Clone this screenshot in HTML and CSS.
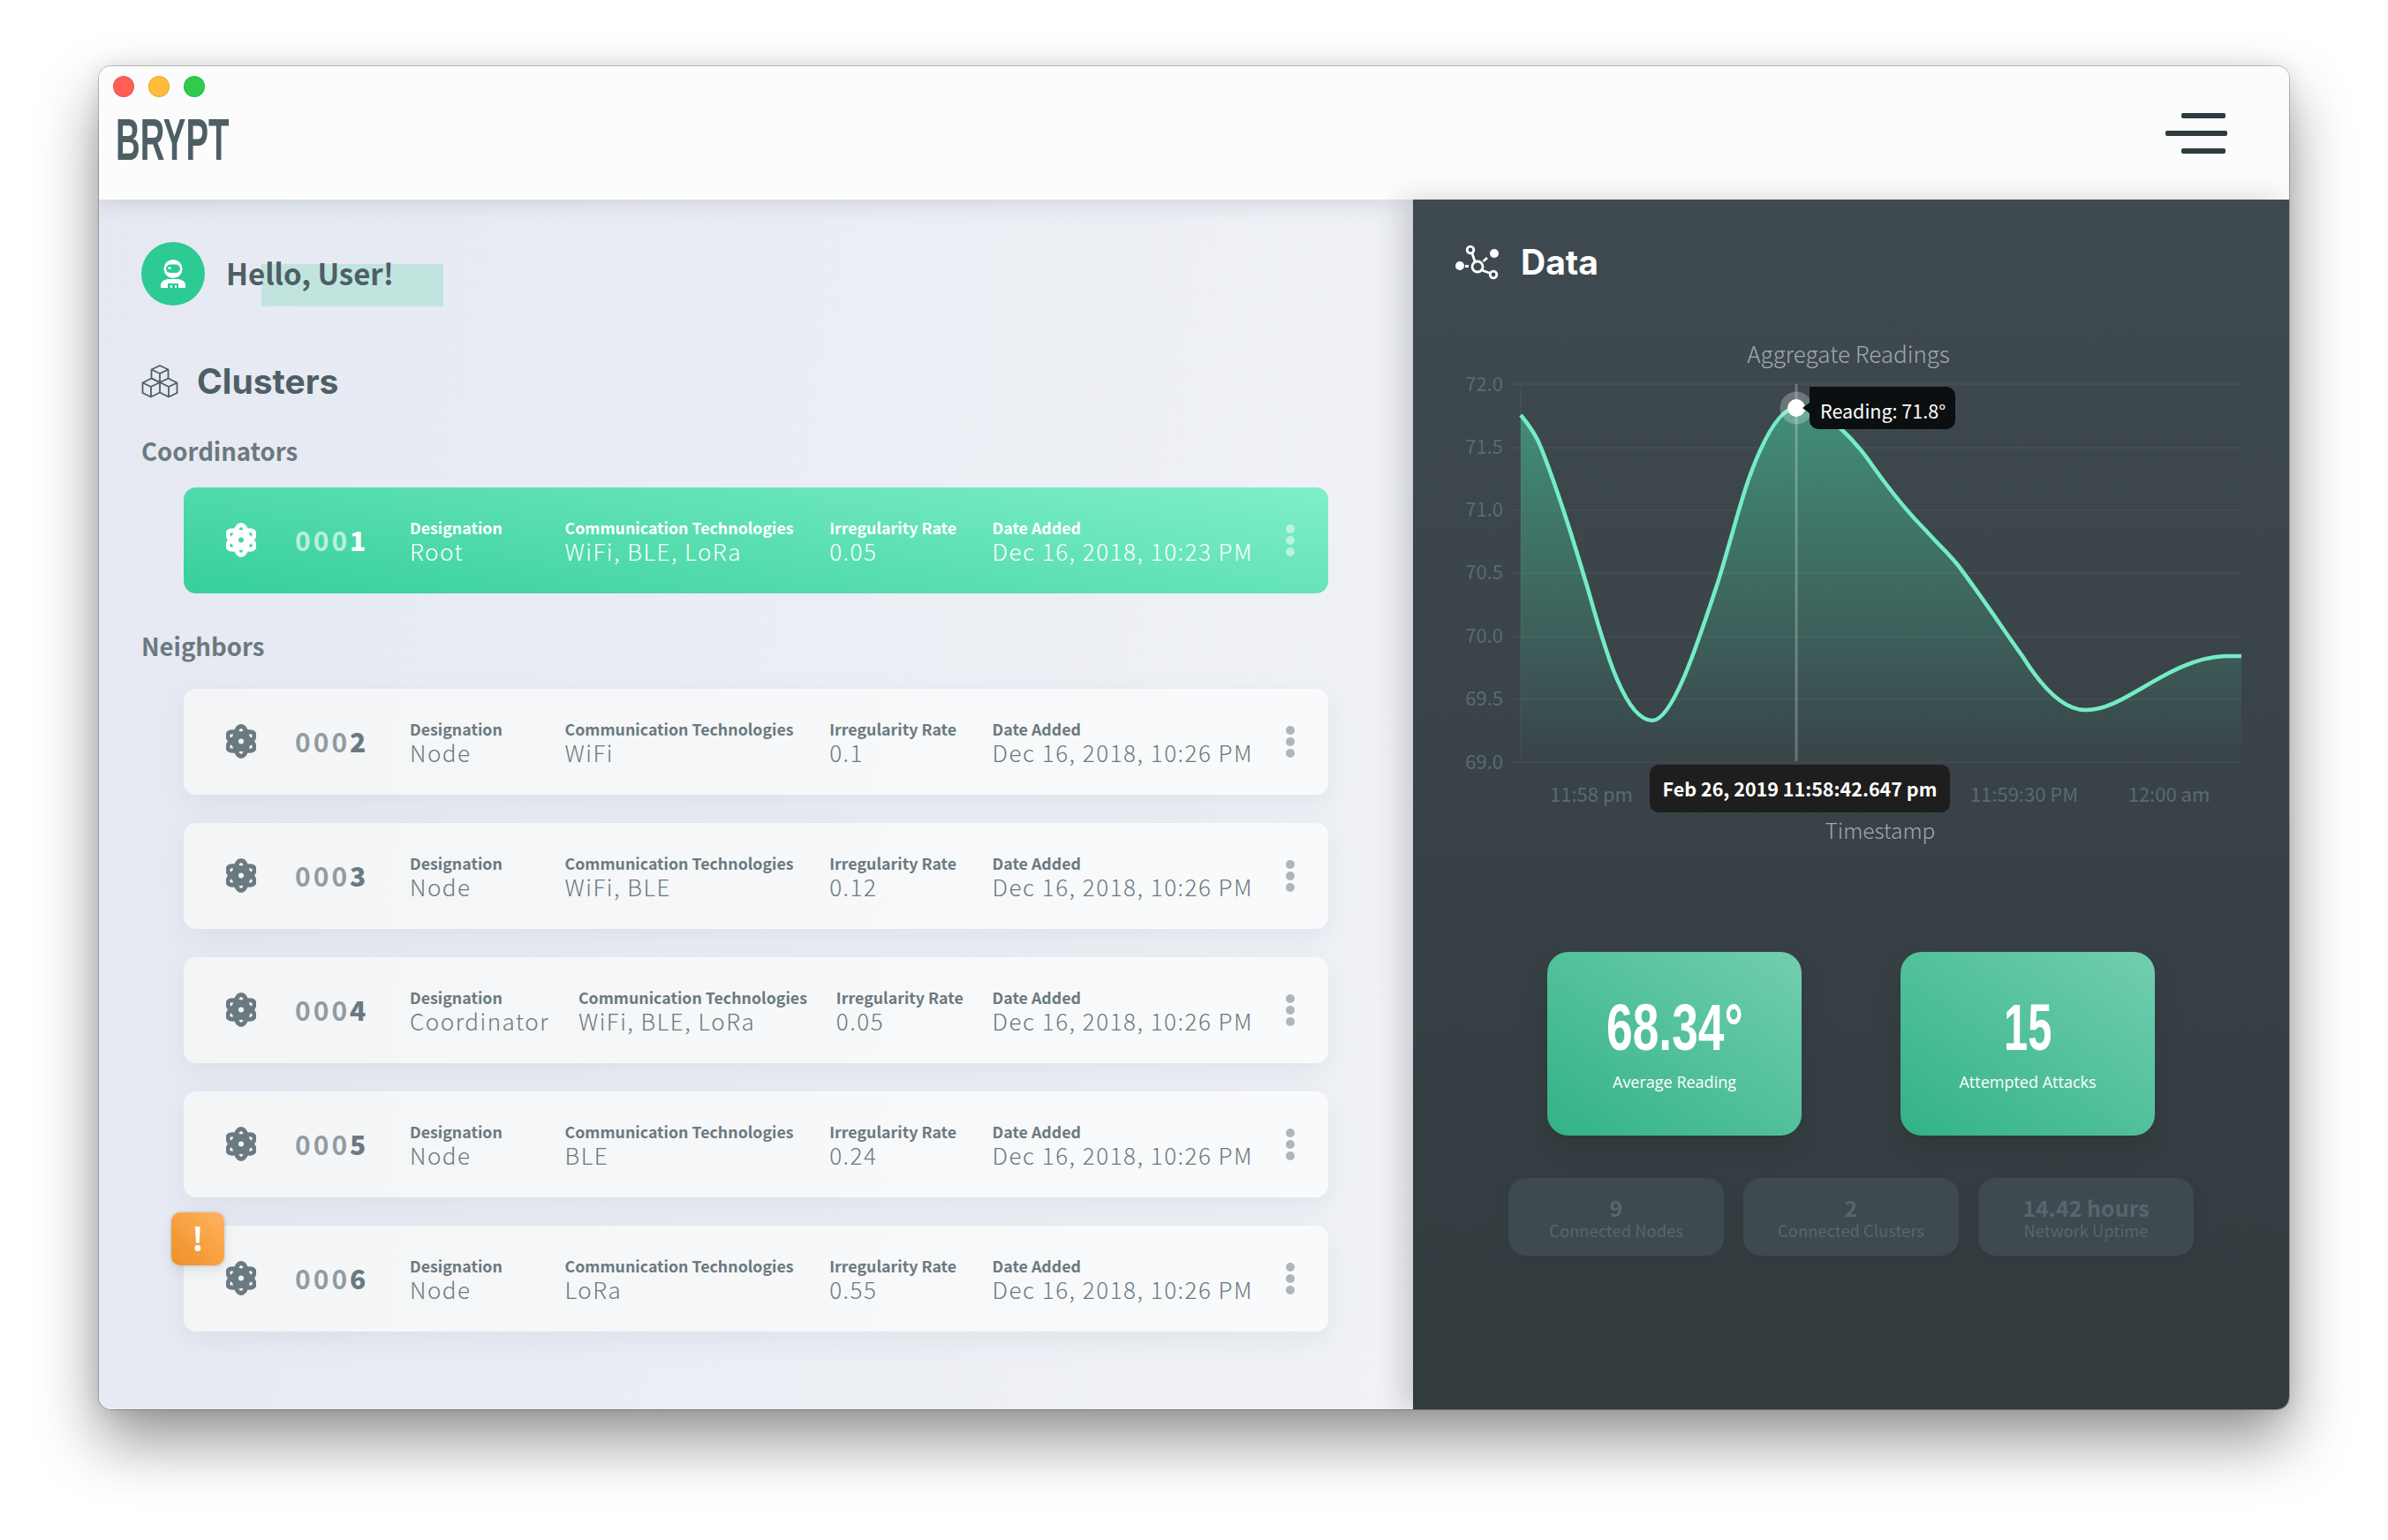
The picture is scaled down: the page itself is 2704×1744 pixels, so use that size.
FILE: index.html
```html
<!DOCTYPE html>
<html lang="en">
<head>
    <meta charset="UTF-8">
    <title>Brypt</title>
    <link rel="stylesheet" href="styles.css">
</head>
<body>
    <svg class="defs" width="0" height="0">
        <symbol id="atom" viewBox="0 0 34 39">
            <g fill="none" stroke="currentColor" stroke-width="5">
                <ellipse cx="17" cy="19.5" rx="7.5" ry="17"/>
                <ellipse cx="17" cy="19.5" rx="7.5" ry="17" transform="rotate(60 17 19.5)"/>
                <ellipse cx="17" cy="19.5" rx="7.5" ry="17" transform="rotate(-60 17 19.5)"/>
                <circle cx="17" cy="19.5" r="5" stroke-width="4"/>
            </g>
        </symbol>
    </svg>

    <div class="window">
        <div class="topbar">
            <div class="lights">
                <span class="light red"></span>
                <span class="light yellow"></span>
                <span class="light green"></span>
            </div>
            <div class="logo">BRYPT</div>
            <div class="menu">
                <span></span>
                <span class="long"></span>
                <span></span>
            </div>
        </div>

        <div class="main">
            <!-- clusters -->
            <div class="left">
                <div class="greet">
                    <div class="avatar">
                        <svg width="30" height="34" viewBox="0 0 30 34">
                            <circle cx="15" cy="11.500" r="10.500" fill="#fff"/>
                            <rect x="7" y="6.500" width="16" height="9.500" rx="4.700" fill="#2dcb93"/>
                            <circle cx="11" cy="10.500" r="1.600" fill="#fff"/>
                            <path fill="#fff" d="M1 33v-3C1 25.500 6 23 11 23h8c5 0 10 2.500 10 7v3z"/>
                            <rect x="9" y="28" width="12" height="5" fill="#2dcb93"/>
                            <rect x="12" y="30" width="2" height="3" fill="#fff"/>
                            <rect x="17" y="30" width="2" height="3" fill="#fff"/>
                        </svg>
                    </div>
                    <div class="hello">Hello, User!</div>
                </div>

                <div class="section-title">
                    <svg width="42" height="38" viewBox="0 0 42 38" fill="none" stroke="#4e5f66" stroke-width="1.800" stroke-linejoin="round">
                        <path d="M21 1l9.500 4.500v10L21 20l-9.500-4.500v-10zM11.500 5.500L21 10l9.500-4.500M21 10v10"/>
                        <path d="M11.500 15.500L21 20v11.500L11 36.500 1.500 32V20.500zM1.500 20.500L11 25l10-5M11 25v11.500"/>
                        <path d="M30.500 15.500l10 5V32L31 36.500 21 31.500M21 20l10 5 9.500-4.500M31 25v11.500"/>
                    </svg>
                    <h2>Clusters</h2>
                </div>

                <div class="group-label">Coordinators</div>
                <div class="row active">
                    <svg class="atom"><use href="#atom"/></svg>
                    <div class="node-id">000<b>1</b></div>
                    <div class="fields">
                        <div class="field kind"><label>Designation</label><span>Root</span></div>
                        <div class="field"><label>Communication Technologies</label><span>WiFi, BLE, LoRa</span></div>
                        <div class="field"><label>Irregularity Rate</label><span>0.05</span></div>
                        <div class="field"><label>Date Added</label><span>Dec 16, 2018, 10:23 PM</span></div>
                    </div>
                    <div class="dots"><i></i><i></i><i></i></div>
                </div>

                <div class="group-label second">Neighbors</div>
                <div class="row">
                    <svg class="atom"><use href="#atom"/></svg>
                    <div class="node-id">000<b>2</b></div>
                    <div class="fields">
                        <div class="field kind"><label>Designation</label><span>Node</span></div>
                        <div class="field"><label>Communication Technologies</label><span>WiFi</span></div>
                        <div class="field"><label>Irregularity Rate</label><span>0.1</span></div>
                        <div class="field"><label>Date Added</label><span>Dec 16, 2018, 10:26 PM</span></div>
                    </div>
                    <div class="dots"><i></i><i></i><i></i></div>
                </div>
                <div class="row">
                    <svg class="atom"><use href="#atom"/></svg>
                    <div class="node-id">000<b>3</b></div>
                    <div class="fields">
                        <div class="field kind"><label>Designation</label><span>Node</span></div>
                        <div class="field"><label>Communication Technologies</label><span>WiFi, BLE</span></div>
                        <div class="field"><label>Irregularity Rate</label><span>0.12</span></div>
                        <div class="field"><label>Date Added</label><span>Dec 16, 2018, 10:26 PM</span></div>
                    </div>
                    <div class="dots"><i></i><i></i><i></i></div>
                </div>
                <div class="row">
                    <svg class="atom"><use href="#atom"/></svg>
                    <div class="node-id">000<b>4</b></div>
                    <div class="fields">
                        <div class="field kind"><label>Designation</label><span>Coordinator</span></div>
                        <div class="field"><label>Communication Technologies</label><span>WiFi, BLE, LoRa</span></div>
                        <div class="field"><label>Irregularity Rate</label><span>0.05</span></div>
                        <div class="field"><label>Date Added</label><span>Dec 16, 2018, 10:26 PM</span></div>
                    </div>
                    <div class="dots"><i></i><i></i><i></i></div>
                </div>
                <div class="row">
                    <svg class="atom"><use href="#atom"/></svg>
                    <div class="node-id">000<b>5</b></div>
                    <div class="fields">
                        <div class="field kind"><label>Designation</label><span>Node</span></div>
                        <div class="field"><label>Communication Technologies</label><span>BLE</span></div>
                        <div class="field"><label>Irregularity Rate</label><span>0.24</span></div>
                        <div class="field"><label>Date Added</label><span>Dec 16, 2018, 10:26 PM</span></div>
                    </div>
                    <div class="dots"><i></i><i></i><i></i></div>
                </div>
                <div class="row">
                    <div class="alert">!</div>
                    <svg class="atom"><use href="#atom"/></svg>
                    <div class="node-id">000<b>6</b></div>
                    <div class="fields">
                        <div class="field kind"><label>Designation</label><span>Node</span></div>
                        <div class="field"><label>Communication Technologies</label><span>LoRa</span></div>
                        <div class="field"><label>Irregularity Rate</label><span>0.55</span></div>
                        <div class="field"><label>Date Added</label><span>Dec 16, 2018, 10:26 PM</span></div>
                    </div>
                    <div class="dots"><i></i><i></i><i></i></div>
                </div>
            </div>

            <!-- data -->
            <div class="right">
                <div class="data-title">
                    <svg width="50" height="40" viewBox="0 0 50 40" fill="none" stroke="#fff" stroke-width="2.800">
                        <circle cx="25" cy="25" r="6"/>
                        <circle cx="17" cy="6" r="3.800"/>
                        <circle cx="43" cy="34" r="3.800"/>
                        <circle cx="5" cy="24" r="5" fill="#fff" stroke="none"/>
                        <circle cx="44" cy="10" r="5" fill="#fff" stroke="none"/>
                        <path d="M19 10l3 9M30 29l9.500 3.500M11 24.500h4M31.500 19l4.500-4"/>
                    </svg>
                    <h2>Data</h2>
                </div>

                <svg class="chart" viewBox="1600 376 992 584" width="992" height="584">
                    <defs>
                        <linearGradient id="fade" x1="0" y1="462" x2="0" y2="866" gradientUnits="userSpaceOnUse">
                            <stop offset="0" stop-color="#45c79c" stop-opacity=".55"/>
                            <stop offset="1" stop-color="#45c79c" stop-opacity="0"/>
                        </linearGradient>
                    </defs>
                    <text class="chart-title" x="2093" y="411" text-anchor="middle">Aggregate Readings</text>

                    <g class="grid">
                        <path d="M1712 435H2538M1712 507H2538M1712 578H2538M1712 649H2538M1712 721H2538M1712 792H2538M1712 863H2538M1722 435V863"/>
                    </g>
                    <g class="ticks">
                        <text x="1702" y="443" text-anchor="end">72.0</text>
                        <text x="1702" y="514" text-anchor="end">71.5</text>
                        <text x="1702" y="585" text-anchor="end">71.0</text>
                        <text x="1702" y="656" text-anchor="end">70.5</text>
                        <text x="1702" y="728" text-anchor="end">70.0</text>
                        <text x="1702" y="799" text-anchor="end">69.5</text>
                        <text x="1702" y="871" text-anchor="end">69.0</text>
                        <text x="1802" y="908" text-anchor="middle">11:58 pm</text>
                        <text x="2292" y="908" text-anchor="middle">11:59:30 PM</text>
                        <text x="2456" y="908" text-anchor="middle">12:00 am</text>
                    </g>

                    <path fill="url(#fade)" d="M1722 470C1732 482 1740 494 1745 507C1760 545 1778 600 1795 657C1810 705 1835 816 1871 816C1895 816 1925 720 1945 660C1960 612 1970 570 1981 540C1992 510 2012 462 2034 462C2050 462 2068 470 2084 485C2100 500 2112 515 2120 527C2140 555 2160 580 2180 600C2195 617 2205 625 2217 640C2240 670 2270 715 2290 743C2310 775 2335 804 2361 804C2405 806 2455 745 2520 743L2538 743V866H1722Z"/>
                    <path class="hover-line" d="M2034 435V862"/>
                    <path class="curve" d="M1722 470C1732 482 1740 494 1745 507C1760 545 1778 600 1795 657C1810 705 1835 816 1871 816C1895 816 1925 720 1945 660C1960 612 1970 570 1981 540C1992 510 2012 462 2034 462C2050 462 2068 470 2084 485C2100 500 2112 515 2120 527C2140 555 2160 580 2180 600C2195 617 2205 625 2217 640C2240 670 2270 715 2290 743C2310 775 2335 804 2361 804C2405 806 2455 745 2520 743L2538 743"/>

                    <circle cx="2034" cy="462" r="18.500" fill="#fff" fill-opacity=".25"/>
                    <circle cx="2034" cy="462" r="10" fill="#fff"/>
                    <path d="M2049 438H2204a10 10 0 0 1 10 10V476a10 10 0 0 1-10 10H2059a10 10 0 0 1-10-10V468L2041 462L2049 456Z" fill="#0b0f10"/>
                    <text class="tip" x="2061" y="474">Reading: 71.8°</text>

                    <rect x="1868" y="866" width="340" height="54" rx="10" fill="#1e1e1e"/>
                    <text class="tip-bold" x="2038" y="902" text-anchor="middle">Feb 26, 2019 11:58:42.647 pm</text>
                    <text class="axis-title" x="2129" y="950" text-anchor="middle">Timestamp</text>
                </svg>

                <div class="big-cards">
                    <div class="big-card">
                        <div class="big-num"><span>68.34°</span></div>
                        <div class="big-label">Average Reading</div>
                    </div>
                    <div class="big-card">
                        <div class="big-num"><span class="tight">15</span></div>
                        <div class="big-label">Attempted Attacks</div>
                    </div>
                </div>

                <div class="small-cards">
                    <div class="small-card"><b>9</b><span>Connected Nodes</span></div>
                    <div class="small-card"><b>2</b><span>Connected Clusters</span></div>
                    <div class="small-card"><b>14.42 hours</b><span>Network Uptime</span></div>
                </div>
            </div>
        </div>
    </div>
</body>
</html>
```
FILE: styles.css
```css
html, body {
    margin: 0;
    padding: 0;
    height: 1744px;
    overflow: hidden;
    background-color: #fff;
}

body {
    font-family: "Noto Sans CJK SC", "Noto Sans", sans-serif;
}

.defs {
    position: absolute;
}

.window {
    width: 2480px;
    height: 1521px;
    margin: 75px 0 0 112px;
    border-radius: 14px;
    overflow: hidden;
    box-shadow: 0 0 0 1px rgba(0, 0, 0, 0.22), 0 36px 70px rgba(0, 0, 0, 0.42), 0 0 24px rgba(0, 0, 0, 0.1);
}

.topbar {
    position: relative;
    z-index: 1;
    height: 151px;
    padding: 11px 70px 0 16px;
    box-sizing: border-box;
    background-color: #fcfcfc;
    box-shadow: 0 4px 24px rgba(60, 70, 100, 0.16);
    display: grid;
    grid-template-columns: 1fr auto;
    grid-template-rows: 24px auto;
}

.lights {
    grid-column: 1 / 3;
    display: flex;
    gap: 16px;
}

.light {
    width: 24px;
    height: 24px;
    border-radius: 50%;
    box-sizing: border-box;
    border: 1px solid rgba(0, 0, 0, 0.1);
}

.red { background-color: #ff5f57; }
.yellow { background-color: #ffbc3a; }
.green { background-color: #2fcb4b; }

.logo {
    margin: 15px 0 0 3px;
    font-family: "Liberation Sans", sans-serif;
    font-weight: 700;
    font-size: 66px;
    line-height: 66px;
    color: #4e5e65;
    transform: scaleX(0.58);
    transform-origin: left center;
}

.menu {
    margin-top: 18px;
    display: flex;
    flex-direction: column;
    align-items: flex-end;
    gap: 14px;
}

.menu span {
    width: 50px;
    height: 6px;
    margin-right: 2px;
    border-radius: 2px;
    background-color: #2e3b3f;
}

.menu .long {
    width: 70px;
    margin-right: 0;
}

.main {
    display: flex;
    height: 1370px;
}

.left {
    width: 1488px;
    padding: 48px 96px 0 48px;
    box-sizing: border-box;
    background: linear-gradient(100deg, #e6e9f2, #f0f2f6);
    color: #6b7980;
}

.greet {
    display: flex;
    align-items: center;
    height: 72px;
}

.avatar {
    width: 72px;
    height: 72px;
    border-radius: 50%;
    background-color: #2dcb93;
    display: flex;
    align-items: center;
    justify-content: center;
}

.hello {
    position: relative;
    z-index: 0;
    margin: -2px 0 0 24px;
    font-size: 33px;
    line-height: 48px;
    font-weight: 700;
    color: #4e5f66;
}

/* the green marker under the greeting */
.hello::before {
    content: "";
    position: absolute;
    z-index: -1;
    left: 40px;
    top: 14px;
    width: 206px;
    height: 48px;
    background-color: #c1e5de;
}

.section-title {
    display: flex;
    align-items: center;
    height: 44px;
    margin-top: 64px;
}

.section-title h2 {
    margin: -2px 0 0 21px;
    font-family: Inter, sans-serif;
    font-size: 39px;
    font-weight: 700;
    color: #4e5f66;
}

.group-label {
    height: 40px;
    margin: 36px 0 22px;
    font-size: 27.500px;
    line-height: 40px;
    font-weight: 700;
    color: #6b7980;
}

.group-label.second {
    margin: 39px 0 29px;
}

.row {
    position: relative;
    display: flex;
    align-items: center;
    height: 120px;
    margin: 0 0 32px 48px;
    padding: 0 38px 0 48px;
    border-radius: 14px;
    background: linear-gradient(95deg, #f3f5f6, #f9fafb);
    box-shadow: 0 10px 30px rgba(100, 115, 150, 0.1);
}

.row.active {
    margin-bottom: 0;
    color: #fff;
    background: linear-gradient(10deg, #36cf9b, #80efc9);
    box-shadow: none;
}

.atom {
    width: 34px;
    height: 39px;
    margin-top: -2px;
    flex: none;
}

.node-id {
    width: 78px;
    margin: -2px 52px 0 44px;
    flex: none;
    font-size: 30px;
    line-height: 40px;
    font-weight: 700;
    letter-spacing: 3px;
    color: rgba(107, 121, 128, 0.72);
}

.node-id b {
    color: #6b7980;
}

.active .node-id {
    color: rgba(255, 255, 255, 0.65);
}

.active .node-id b {
    color: #fff;
}

.fields {
    flex: 1;
    margin-top: -2px;
    display: flex;
    justify-content: space-between;
}

.field {
    display: flex;
    flex-direction: column;
}

.field.kind {
    min-width: 135px;
}

.field label {
    font-size: 17.800px;
    line-height: 26px;
    font-weight: 700;
}

.field span {
    font-size: 26px;
    line-height: 28px;
    font-weight: 300;
    letter-spacing: 1.500px;
}

.dots {
    margin-left: 37px;
    display: flex;
    flex-direction: column;
    gap: 3px;
    flex: none;
}

.dots i {
    width: 10px;
    height: 10px;
    border-radius: 50%;
    background-color: #adb6bb;
}

.active .dots i {
    background-color: rgba(255, 255, 255, 0.5);
}

.alert {
    position: absolute;
    left: -14px;
    top: -15px;
    width: 60px;
    height: 60px;
    border-radius: 10px;
    background: linear-gradient(45deg, #ee8f25, #ffb461);
    box-shadow: 0 0 0 2px rgba(120, 130, 150, 0.12), 0 6px 14px rgba(100, 115, 150, 0.15);
    color: #fff;
    font-size: 36px;
    line-height: 56px;
    font-weight: 700;
    text-align: center;
}

.right {
    position: relative;
    z-index: 2;
    flex: 1;
    background: linear-gradient(180deg, #3f4a50, #323b3e);
    box-shadow: -12px 0 30px rgba(0, 0, 0, 0.16);
    color: #fff;
}

.data-title {
    display: flex;
    align-items: center;
    height: 40px;
    padding: 51px 0 0 48px;
}

.data-title h2 {
    margin: -2px 0 0 24px;
    font-family: Inter, sans-serif;
    font-size: 39px;
    font-weight: 700;
    color: #fff;
}

.chart {
    display: block;
    margin-top: 59px;
}

.chart-title {
    font-family: "Noto Sans CJK SC", sans-serif;
    font-size: 26px;
    font-weight: 300;
    fill: #a1a9ad;
}

.axis-title {
    font-family: "Noto Sans CJK SC", sans-serif;
    font-size: 24.500px;
    font-weight: 300;
    fill: #a1a9ad;
}

.grid path {
    fill: none;
    stroke: rgba(255, 255, 255, 0.045);
    stroke-width: 2;
}

.ticks text {
    font-family: "Noto Sans CJK SC", sans-serif;
    font-size: 22px;
    font-weight: 400;
    fill: #5a6a71;
}

.curve {
    fill: none;
    stroke: #74ecc6;
    stroke-width: 4.500;
}

.hover-line {
    fill: none;
    stroke: rgba(255, 255, 255, 0.25);
    stroke-width: 3;
}

.tip {
    font-family: "Noto Sans CJK SC", sans-serif;
    font-size: 21.500px;
    fill: #fff;
}

.tip-bold {
    font-family: "Noto Sans CJK SC", sans-serif;
    font-size: 21.500px;
    font-weight: 700;
    fill: #fff;
}

.big-cards {
    display: flex;
    justify-content: center;
    gap: 112px;
    margin-top: 118px;
}

.big-card {
    width: 288px;
    height: 208px;
    border-radius: 24px;
    background: linear-gradient(35deg, #32b287, #72ceb0);
    box-shadow: 0 12px 30px rgba(0, 0, 0, 0.12);
    text-align: center;
}

.big-num {
    height: 76px;
    padding-top: 48px;
    font-family: "Liberation Sans", sans-serif;
    font-size: 74px;
    line-height: 76px;
    font-weight: 700;
    color: #fff;
}

.big-num span {
    display: inline-block;
    transform: scaleX(0.72);
}

.big-num .tight {
    transform: scaleX(0.66);
}

.big-label {
    margin-top: 9px;
    font-family: "Open Sans", sans-serif;
    font-size: 18px;
    line-height: 28px;
    color: #fff;
}

.small-cards {
    display: flex;
    justify-content: center;
    gap: 22px;
    margin-top: 48px;
}

.small-card {
    width: 244px;
    height: 88px;
    box-sizing: border-box;
    padding-top: 19px;
    border-radius: 20px;
    background-color: #3e4a50;
    box-shadow: 0 8px 20px rgba(0, 0, 0, 0.06);
    display: flex;
    flex-direction: column;
    align-items: center;
    color: #56666e;
}

.small-card b {
    font-size: 25px;
    line-height: 28px;
    font-weight: 700;
}

.small-card span {
    font-size: 18.400px;
    line-height: 24px;
    font-weight: 400;
}
```
